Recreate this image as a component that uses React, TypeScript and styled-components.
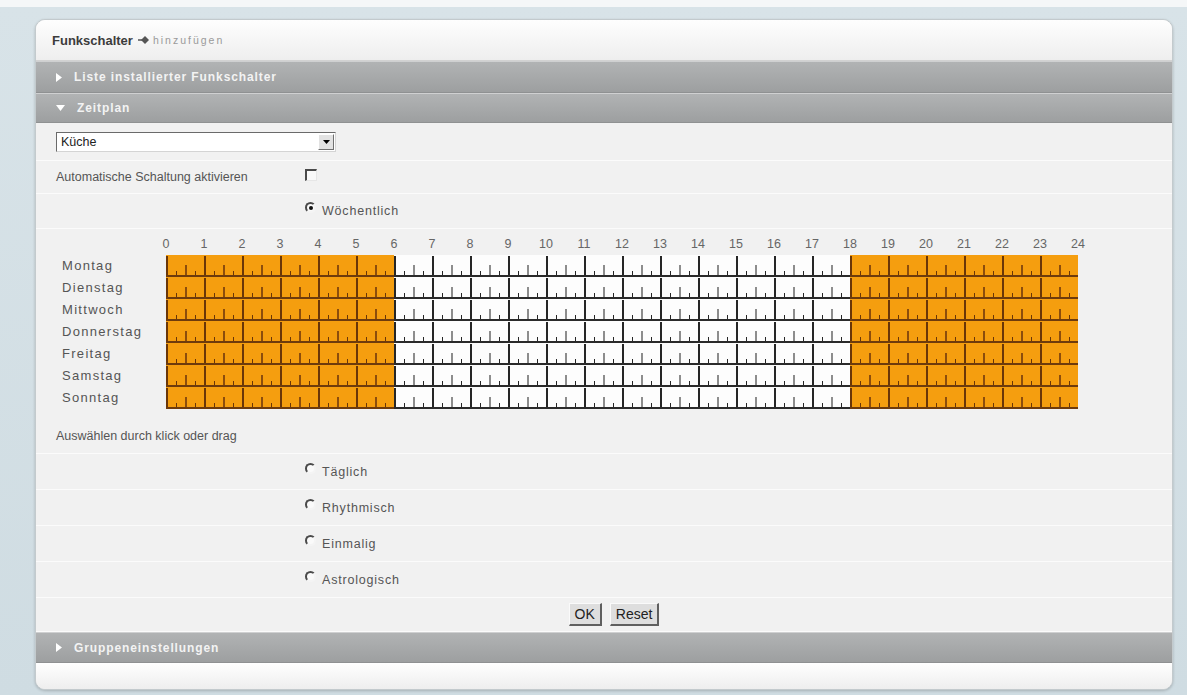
import * as React from 'react'
import styled, { createGlobalStyle } from 'styled-components'

const GlobalStyle = createGlobalStyle`
  html, body {
    margin: 0;
    padding: 0;
  }
  body {
    height: 695px;
    overflow: hidden;
    background: linear-gradient(#f5f7f8 0, #f5f7f8 7px, #d8e3e8 7px, #cfdce2 100%);
    font-family: 'Liberation Sans', Arial, sans-serif;
  }
`

const Page = styled.div`
  padding: 19px 14px 0 35px;
`

const Panel = styled.div`
  width: 1138px;
  box-sizing: border-box;
  border: 1px solid #c3cacd;
  border-radius: 10px;
  overflow: hidden;
  background: #f1f1f1;
  box-shadow: 0 1px 3px rgba(0, 0, 0, 0.2);
`

const Header = styled.div`
  height: 40px;
  display: flex;
  align-items: center;
  gap: 5px;
  padding-left: 16px;
  background: linear-gradient(#fefefe, #eeeeee);
  border-bottom: 1px solid #d2d2d2;
`

const Title = styled.span`
  font-size: 13px;
  font-weight: bold;
  color: #3c3c3c;
`

const AddLink = styled.span`
  display: flex;
  align-items: center;
  gap: 3px;
  font-size: 10.5px;
  letter-spacing: 2px;
  color: #9a9a9a;
`

const Bar = styled.div<{ $h: number }>`
  height: ${(p) => p.$h}px;
  box-sizing: border-box;
  display: flex;
  align-items: center;
  gap: 12px;
  padding-left: 20px;
  background: linear-gradient(#b1b3b4, #9d9fa0);
  border-top: 1px solid #cfd0d1;
  border-bottom: 1px solid #8f9192;
  font-size: 12px;
  font-weight: bold;
  letter-spacing: 0.9px;
  color: #f3f3f3;
`

const Row = styled.div<{ $h: number; $indent?: number; $center?: boolean }>`
  height: ${(p) => p.$h}px;
  box-sizing: border-box;
  display: flex;
  align-items: center;
  justify-content: ${(p) => (p.$center ? 'center' : 'flex-start')};
  padding-left: ${(p) => p.$indent ?? 20}px;
  border-bottom: 1px solid #fbfbfb;
  font-size: 12.5px;
  color: #555;
`

const FieldLabel = styled.span`
  width: 249px;
`

const Select = styled.div`
  width: 280px;
  height: 20px;
  box-sizing: border-box;
  display: flex;
  align-items: center;
  justify-content: space-between;
  padding-left: 4px;
  background: #fff;
  border: 1px solid;
  border-color: #6a6a6a #d4d4d4 #d4d4d4 #6a6a6a;
  font-size: 12.5px;
  color: #222;
`

const SelectArrow = styled.span`
  width: 16px;
  height: 16px;
  box-sizing: border-box;
  display: flex;
  align-items: center;
  justify-content: center;
  margin-right: 1px;
  background: #e2e2e2;
  border: 1px solid;
  border-color: #fff #707070 #707070 #fff;
`

const Checkbox = styled.span`
  width: 12px;
  height: 12px;
  box-sizing: border-box;
  margin-top: -5px;
  background: #f9f9f9;
  border: 1px solid;
  border-color: #4a4a4a #e6e6e6 #e6e6e6 #4a4a4a;
  border-width: 2px 1px 1px 2px;
`

const RadioOption = styled.label`
  display: flex;
  align-items: center;
  gap: 6px;
  font-size: 12.5px;
  letter-spacing: 0.8px;
  color: #555;
`

const Radio = styled.span<{ $checked?: boolean }>`
  position: relative;
  width: 11px;
  height: 11px;
  box-sizing: border-box;
  margin-top: -7px;
  border-radius: 50%;
  border: 2px solid;
  border-color: #4a4a4a #f4f4f4 #f4f4f4 #4a4a4a;
  background: #fafafa;

  &::after {
    content: '';
    display: ${(p) => (p.$checked ? 'block' : 'none')};
    position: absolute;
    left: 1.5px;
    top: 1.5px;
    width: 4px;
    height: 4px;
    border-radius: 50%;
    background: #111;
  }
`

const Schedule = styled.div`
  padding: 4px 0 9px 26px;
  border-bottom: 1px solid #fbfbfb;
`

const HourScale = styled.div`
  display: grid;
  grid-template-columns: repeat(25, 38px);
  margin-left: 85px;
  height: 22px;
  line-height: 22px;
  font-size: 12.5px;
  color: #666;
  text-align: center;
`

const DayRow = styled.div`
  display: flex;
  height: 22px;
`

const DayLabel = styled.div`
  width: 104px;
  line-height: 22px;
  font-size: 13px;
  letter-spacing: 1.3px;
  color: #555;
`

const Slots = styled.div`
  display: grid;
  grid-template-columns: repeat(96, 1fr);
  width: 912px;
`

const tickHeight = [19, 4, 10, 4]

const Slot = styled.div<{ $on: boolean; $q: number }>`
  position: relative;
  box-sizing: border-box;
  background: ${(p) => (p.$on ? '#f59e0f' : '#fdfdfd')};
  border-bottom: 2px solid ${(p) => (p.$on ? '#6e3b0c' : '#2b2b2b')};
  cursor: pointer;

  &::before {
    content: '';
    position: absolute;
    left: 0;
    bottom: 0;
    width: ${(p) => (p.$q === 0 ? 2 : 1.5)}px;
    height: ${(p) => tickHeight[p.$q]}px;
    background: ${(p) =>
      p.$on ? (p.$q === 2 ? '#8c4d0c' : '#6a3608') : p.$q === 2 ? '#8d8d8d' : '#262626'};
  }
`

const Hint = styled.div`
  margin: 19px 0 0 -6px;
  height: 16px;
  line-height: 16px;
  font-size: 12.5px;
  color: #555;
`

const Button = styled.button`
  height: 23px;
  margin: 0 4px;
  padding: 0 5px;
  font-family: inherit;
  font-size: 14px;
  color: #222;
  background: #dedede;
  border: 1px solid;
  border-color: #fafafa #5f5f5f #5f5f5f #fafafa;
  border-width: 1px 2px 2px 1px;
`

const Footer = styled.div`
  height: 26px;
  background: linear-gradient(#ffffff, #eeeeee);
`

const days = ['Montag', 'Dienstag', 'Mittwoch', 'Donnerstag', 'Freitag', 'Samstag', 'Sonntag']
const hours = Array.from({ length: 25 }, (_, i) => i)
const slots = Array.from({ length: 96 }, (_, i) => i)
const isOn = (i: number) => i < 24 || i >= 72

const TriangleRight = () => (
  <svg width="6" height="9" viewBox="0 0 6 9">
    <path d="M0 0 L6 4.5 L0 9 Z" fill="#fff" />
  </svg>
)

const TriangleDown = () => (
  <svg width="9" height="6" viewBox="0 0 9 6">
    <path d="M0 0 L9 0 L4.5 6 Z" fill="#fff" />
  </svg>
)

const AddIcon = () => (
  <svg width="12" height="10" viewBox="0 0 12 10">
    <path d="M0 4.2 H4 V5.8 H0 Z" fill="#555" />
    <path d="M3 5 L7 1 L11 5 L7 9 Z" fill="#555" />
  </svg>
)

const App = () => (
  <>
    <GlobalStyle />
    <Page>
      <Panel>
        <Header>
          <Title>Funkschalter</Title>
          <AddLink>
            <AddIcon />
            hinzufügen
          </AddLink>
        </Header>
        <Bar $h={32}>
          <TriangleRight />
          Liste installierter Funkschalter
        </Bar>
        <Bar $h={30}>
          <TriangleDown />
          Zeitplan
        </Bar>
        <Row $h={38}>
          <Select>
            Küche
            <SelectArrow>
              <svg width="7" height="4" viewBox="0 0 7 4">
                <path d="M0 0 H7 L3.5 4 Z" fill="#000" />
              </svg>
            </SelectArrow>
          </Select>
        </Row>
        <Row $h={33}>
          <FieldLabel>Automatische Schaltung aktivieren</FieldLabel>
          <Checkbox />
        </Row>
        <Row $h={35} $indent={269}>
          <RadioOption>
            <Radio $checked />
            Wöchentlich
          </RadioOption>
        </Row>
        <Schedule>
          <HourScale>
            {hours.map((h) => (
              <span key={h}>{h}</span>
            ))}
          </HourScale>
          {days.map((d) => (
            <DayRow key={d}>
              <DayLabel>{d}</DayLabel>
              <Slots>
                {slots.map((i) => (
                  <Slot key={i} $on={isOn(i)} $q={i % 4} />
                ))}
              </Slots>
            </DayRow>
          ))}
          <Hint>Auswählen durch klick oder drag</Hint>
        </Schedule>
        {['Täglich', 'Rhythmisch', 'Einmalig', 'Astrologisch'].map((o) => (
          <Row key={o} $h={36} $indent={269}>
            <RadioOption>
              <Radio />
              {o}
            </RadioOption>
          </Row>
        ))}
        <Row $h={34} $indent={20} $center>
          <Button>OK</Button>
          <Button>Reset</Button>
        </Row>
        <Bar $h={31}>
          <TriangleRight />
          Gruppeneinstellungen
        </Bar>
        <Footer />
      </Panel>
    </Page>
  </>
)

export default App
